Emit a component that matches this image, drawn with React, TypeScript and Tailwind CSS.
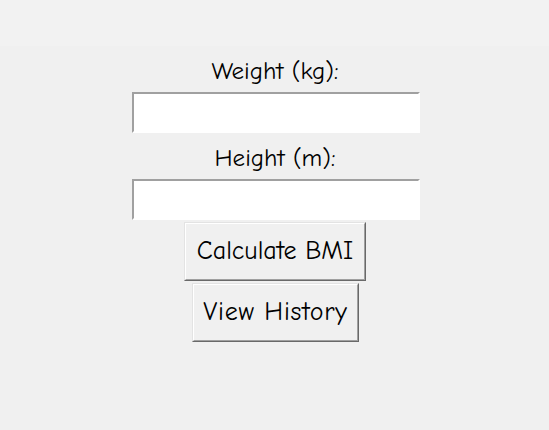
import React from "react";

const font = { fontFamily: '"Comic Sans MS", "Comic Neue", "DejaVu Sans", sans-serif' };

function Entry() {
  return (
    <div className="ml-[2px] w-[288px] h-[41px] border-2 border-t-[#a0a0a0] border-l-[#a0a0a0] border-r-white border-b-white bg-white" />
  );
}

function Btn({ label, w, extra }: { label: string; w: string; extra: string }) {
  return (
    <div className={`${w} h-[59px] border border-t-[#e3e3e3] border-l-[#e3e3e3] border-r-[#696969] border-b-[#696969]`}>
      <div className={`w-full h-full border border-t-white border-l-white border-r-[#a0a0a0] border-b-[#a0a0a0] bg-[#f0f0f0] flex items-center justify-center text-[26px] text-black whitespace-nowrap ${extra}`}>
        {label}
      </div>
    </div>
  );
}

export default function App() {
  return (
    <div className="w-[549px] h-[430px] bg-[#f0f0f0] flex flex-col" style={font}>
      <div className="h-[46px] bg-[#f2f2f2]" />
      <div className="flex flex-col items-center">
        <div className="h-[46px] flex items-center text-[25px] text-black pt-[4px] ml-[1px]">Weight (kg):</div>
        <Entry />
        <div className="h-[46px] flex items-center text-[25px] text-black pt-[4px] ml-[1px]">Height (m):</div>
        <Entry />
        <div className="h-[2px]" />
        <div className="flex flex-col items-center gap-[2px]">
          <div className="ml-[1px]"><Btn label="Calculate BMI" w="w-[182px]" extra="" /></div>
          <div className="ml-[2px]"><Btn label="View History" w="w-[167px]" extra="tracking-[0.8px]" /></div>
        </div>
      </div>
    </div>
  );
}
